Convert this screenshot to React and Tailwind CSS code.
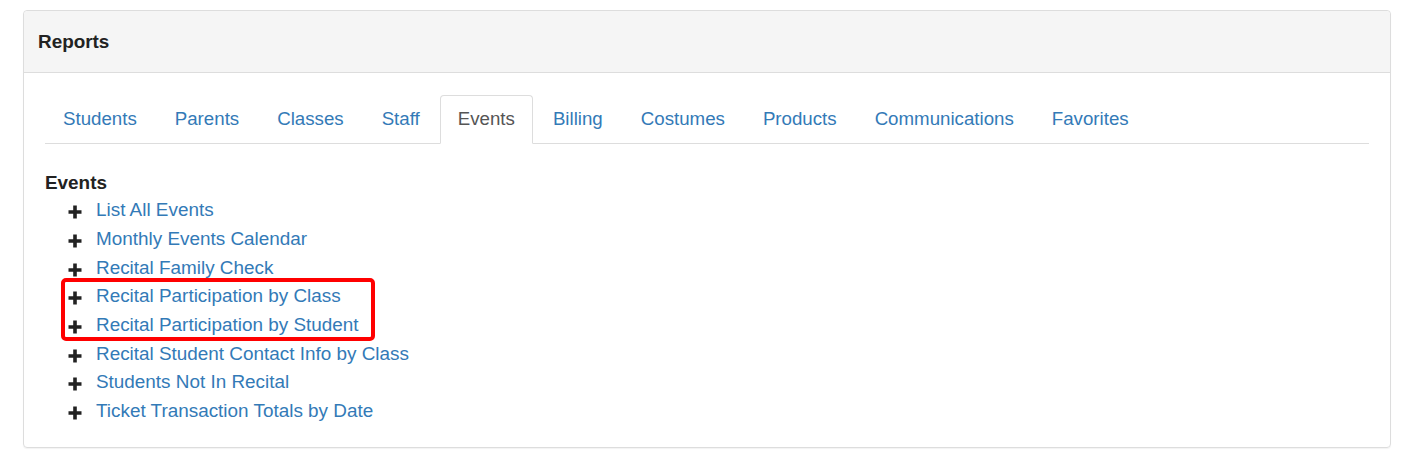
import React from "react";

const tabs = ["Students", "Parents", "Classes", "Staff", "Events", "Billing", "Costumes", "Products", "Communications", "Favorites"];

const reports = [
  "List All Events",
  "Monthly Events Calendar",
  "Recital Family Check",
  "Recital Participation by Class",
  "Recital Participation by Student",
  "Recital Student Contact Info by Class",
  "Students Not In Recital",
  "Ticket Transaction Totals by Date",
];

function Plus() {
  return (
    <svg viewBox="0 0 14 14" className="h-[14px] w-[14px] shrink-0" aria-hidden="true">
      <path d="M5.2 0.5h3.6v4.7h4.7v3.6H8.8v4.7H5.2V8.8H0.5V5.2h4.7z" fill="#222" />
    </svg>
  );
}

function ReportRow({ label }) {
  return (
    <li className="flex h-[28.7px] items-center">
      <span className="ml-[23px] mt-[4px] w-[28px]">
        <Plus />
      </span>
      <a href="#" className="text-[18.9px] leading-[28px] text-[#337ab7]">
        {label}
      </a>
    </li>
  );
}

export default function App() {
  const active = "Events";
  return (
    <div className="min-h-[461px] bg-white pt-[10px] pl-[23px] pr-[19px] font-['Liberation_Sans',Arial,sans-serif] text-[#333]">
      <div className="rounded-[4px] border border-[#ddd] shadow-[0_1px_1px_rgba(0,0,0,0.05)]">
        <div className="flex h-[62px] items-center rounded-t-[4px] border-b border-[#ddd] bg-[#f5f5f5] px-[14px]">
          <h3 className="text-[18.9px] font-bold leading-[26px] text-[#222]">Reports</h3>
        </div>
        <div className="px-[21px] pt-[22px] pb-[21px]">
          <ul className="flex border-b border-[#ddd]">
            {tabs.map((t) => (
              <li key={t} className="-mb-px mr-[2px]">
                {t === active ? (
                  <span className="block rounded-t-[4px] border border-[#ddd] border-b-transparent bg-white px-[17px] pt-[9px] pb-[11px] text-[18.7px] leading-[27px] text-[#555]">
                    {t}
                  </span>
                ) : (
                  <a href="#" className="block border border-transparent px-[17px] pt-[9px] pb-[11px] text-[18.7px] leading-[27px] text-[#337ab7]">
                    {t}
                  </a>
                )}
              </li>
            ))}
          </ul>
          <div className="pt-[26px]">
            <h4 className="text-[18.9px] font-bold leading-[26px] text-[#222]">Events</h4>
            <ul>
              {reports.slice(0, 3).map((r) => (
                <ReportRow key={r} label={r} />
              ))}
              <li className="relative">
                <div className="pointer-events-none absolute left-[16px] top-[-4px] h-[63px] w-[314px] rounded-[5px] border-[4px] border-[#ff0000]" />
                <ul>
                  {reports.slice(3, 5).map((r) => (
                    <ReportRow key={r} label={r} />
                  ))}
                </ul>
              </li>
              {reports.slice(5).map((r) => (
                <ReportRow key={r} label={r} />
              ))}
            </ul>
          </div>
        </div>
      </div>
    </div>
  );
}
